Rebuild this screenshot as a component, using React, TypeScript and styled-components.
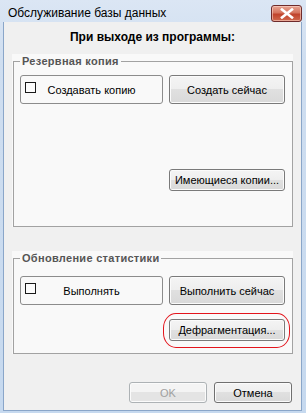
import styled, { createGlobalStyle } from "styled-components";

const GlobalStyle = createGlobalStyle`
  body {
    margin: 0;
    font-family: "Liberation Sans", Arial, sans-serif;
  }
`;

export default function App() {
  return (
    <>
      <GlobalStyle />
      <Window>
        <TitleBar>
          <Title>Обслуживание базы данных</Title>
          <CloseButton aria-label="Закрыть">
            <svg width="14" height="11" viewBox="0 0 14 11">
              <path
                d="M2 1.5 L12 9.5 M12 1.5 L2 9.5"
                stroke="#ffffff"
                strokeWidth="2.6"
                strokeLinecap="square"
              />
            </svg>
          </CloseButton>
        </TitleBar>
        <Client>
          <Heading>При выходе из программы:</Heading>

          <Panel $top={10}>
            <Group $bottom={35}>
              <Legend>Резервная копия</Legend>
              <Row $top={7}>
                <CheckButton>
                  <CheckBox />
                  <span>Создавать копию</span>
                </CheckButton>
                <Button $height={29}>Создать сейчас</Button>
              </Row>
              <RightStack $top={65}>
                <Button $height={22}>Имеющиеся копии...</Button>
              </RightStack>
            </Group>
          </Panel>

          <Panel $top={24}>
            <Group $bottom={12}>
              <Legend>Обновление статистики</Legend>
              <Row $top={11}>
                <CheckButton>
                  <CheckBox />
                  <span>Выполнять</span>
                </CheckButton>
                <Button $height={29}>Выполнить сейчас</Button>
              </Row>
              <RightStack $top={14}>
                <Marked>
                  <Button $height={22}>Дефрагментация...</Button>
                </Marked>
              </RightStack>
            </Group>
          </Panel>

          <Footer>
            <DialogButton disabled>OK</DialogButton>
            <DialogButton>Отмена</DialogButton>
          </Footer>
        </Client>
      </Window>
    </>
  );
}

const Window = styled.div`
  width: 306px;
  height: 413px;
  box-sizing: border-box;
  display: flex;
  flex-direction: column;
  background: linear-gradient(to bottom, #dbe6f4 0px, #cfdef0 60px, #c6d9ef 100%);
`;

const TitleBar = styled.div`
  height: 22px;
  flex: none;
  display: flex;
  align-items: flex-start;
  padding: 0 4px 0 8px;
`;

const Title = styled.div`
  margin-top: 6px;
  font-size: 12px;
  line-height: 14px;
  color: #000;
  white-space: nowrap;
`;

const CloseButton = styled.div`
  margin: 5px 0 0 auto;
  width: 31px;
  height: 17px;
  box-sizing: border-box;
  border: 1px solid #6e2b2b;
  border-radius: 3px;
  background: linear-gradient(to bottom, #e8a593 0%, #d5755f 45%, #c0432c 55%, #d06a4f 100%);
  box-shadow: inset 0 0 0 1px rgba(255, 220, 210, 0.55);
  display: flex;
  align-items: center;
  justify-content: center;
`;

const Client = styled.div`
  flex: 1;
  margin: 0 4px 2px 3px;
  border: 1px solid #8aa6c9;
  border-top: none;
  background: #f0f0f0;
  display: flex;
  flex-direction: column;
`;

const Heading = styled.div`
  margin-top: 8px;
  font-size: 12px;
  line-height: 14px;
  font-weight: bold;
  text-align: center;
  color: #000;
`;

const Panel = styled.div<{ $top: number }>`
  margin: ${(p) => p.$top}px 8px 0 8px;
  background: #f9f9f9;
`;

const Group = styled.fieldset<{ $bottom: number }>`
  margin: 0 0 0 1px;
  padding: 0 0 ${(p) => p.$bottom}px 6px;
  border: 1px solid #a2a2a2;
  min-width: 0;
`;

const Legend = styled.legend`
  padding: 0 2px;
  font-size: 11px;
  line-height: 14px;
  font-weight: bold;
  letter-spacing: 0.3px;
  color: #555555;
`;

const Row = styled.div<{ $top: number }>`
  margin-top: ${(p) => p.$top}px;
  display: flex;
  gap: 6px;
`;

const RightStack = styled.div<{ $top: number }>`
  margin: ${(p) => p.$top}px 0 0 149px;
  display: flex;
`;

const CheckButton = styled.div`
  width: 143px;
  height: 29px;
  box-sizing: border-box;
  border: 1px solid #8c8c8c;
  border-radius: 3px;
  display: grid;
  grid-template-columns: 1fr auto 1fr;
  align-items: center;
  font-size: 11px;
  color: #000;

  span {
    grid-column: 2;
    white-space: nowrap;
  }
`;

const CheckBox = styled.div`
  grid-column: 1;
  justify-self: start;
  width: 11px;
  height: 11px;
  box-sizing: border-box;
  margin: 0 0 4px 4px;
  border: 1px solid #1a1a1a;
  background: #fcfcfc;
`;

const Button = styled.div<{ $height: number }>`
  width: 116px;
  height: ${(p) => p.$height}px;
  box-sizing: border-box;
  border: 1px solid #7a7a7a;
  border-radius: 3px;
  background: linear-gradient(to bottom, #f4f4f4 0%, #eeeeee 50%, #e0e0e0 50%, #d9d9d9 100%);
  box-shadow: inset 0 0 0 1px #fbfbfb;
  display: flex;
  align-items: center;
  justify-content: center;
  font-size: 11px;
  color: #000;
  white-space: nowrap;
`;

const Marked = styled.div`
  position: relative;

  &::after {
    content: "";
    position: absolute;
    top: -6px;
    left: -6px;
    right: -5px;
    bottom: -7px;
    border: 1px solid #e3141c;
    border-radius: 13px / 15px;
    pointer-events: none;
  }
`;

const Footer = styled.div`
  margin-top: 28px;
  padding-right: 9px;
  display: flex;
  justify-content: flex-end;
  gap: 7px;
`;

const DialogButton = styled.div<{ disabled?: boolean }>`
  width: 78px;
  height: 21px;
  box-sizing: border-box;
  border: 1px solid ${(p) => (p.disabled ? "#adb2b5" : "#707070")};
  border-radius: 3px;
  background: ${(p) =>
    p.disabled
      ? "linear-gradient(to bottom, #f4f4f4 0%, #f4f4f4 50%, #e4e4e4 50%, #e4e4e4 100%)"
      : "linear-gradient(to bottom, #f4f4f4 0%, #eeeeee 50%, #e0e0e0 50%, #d9d9d9 100%)"};
  box-shadow: inset 0 0 0 1px #fbfbfb;
  display: flex;
  align-items: center;
  justify-content: center;
  font-size: 11px;
  color: ${(p) => (p.disabled ? "#a0a0a0" : "#000")};
`;
